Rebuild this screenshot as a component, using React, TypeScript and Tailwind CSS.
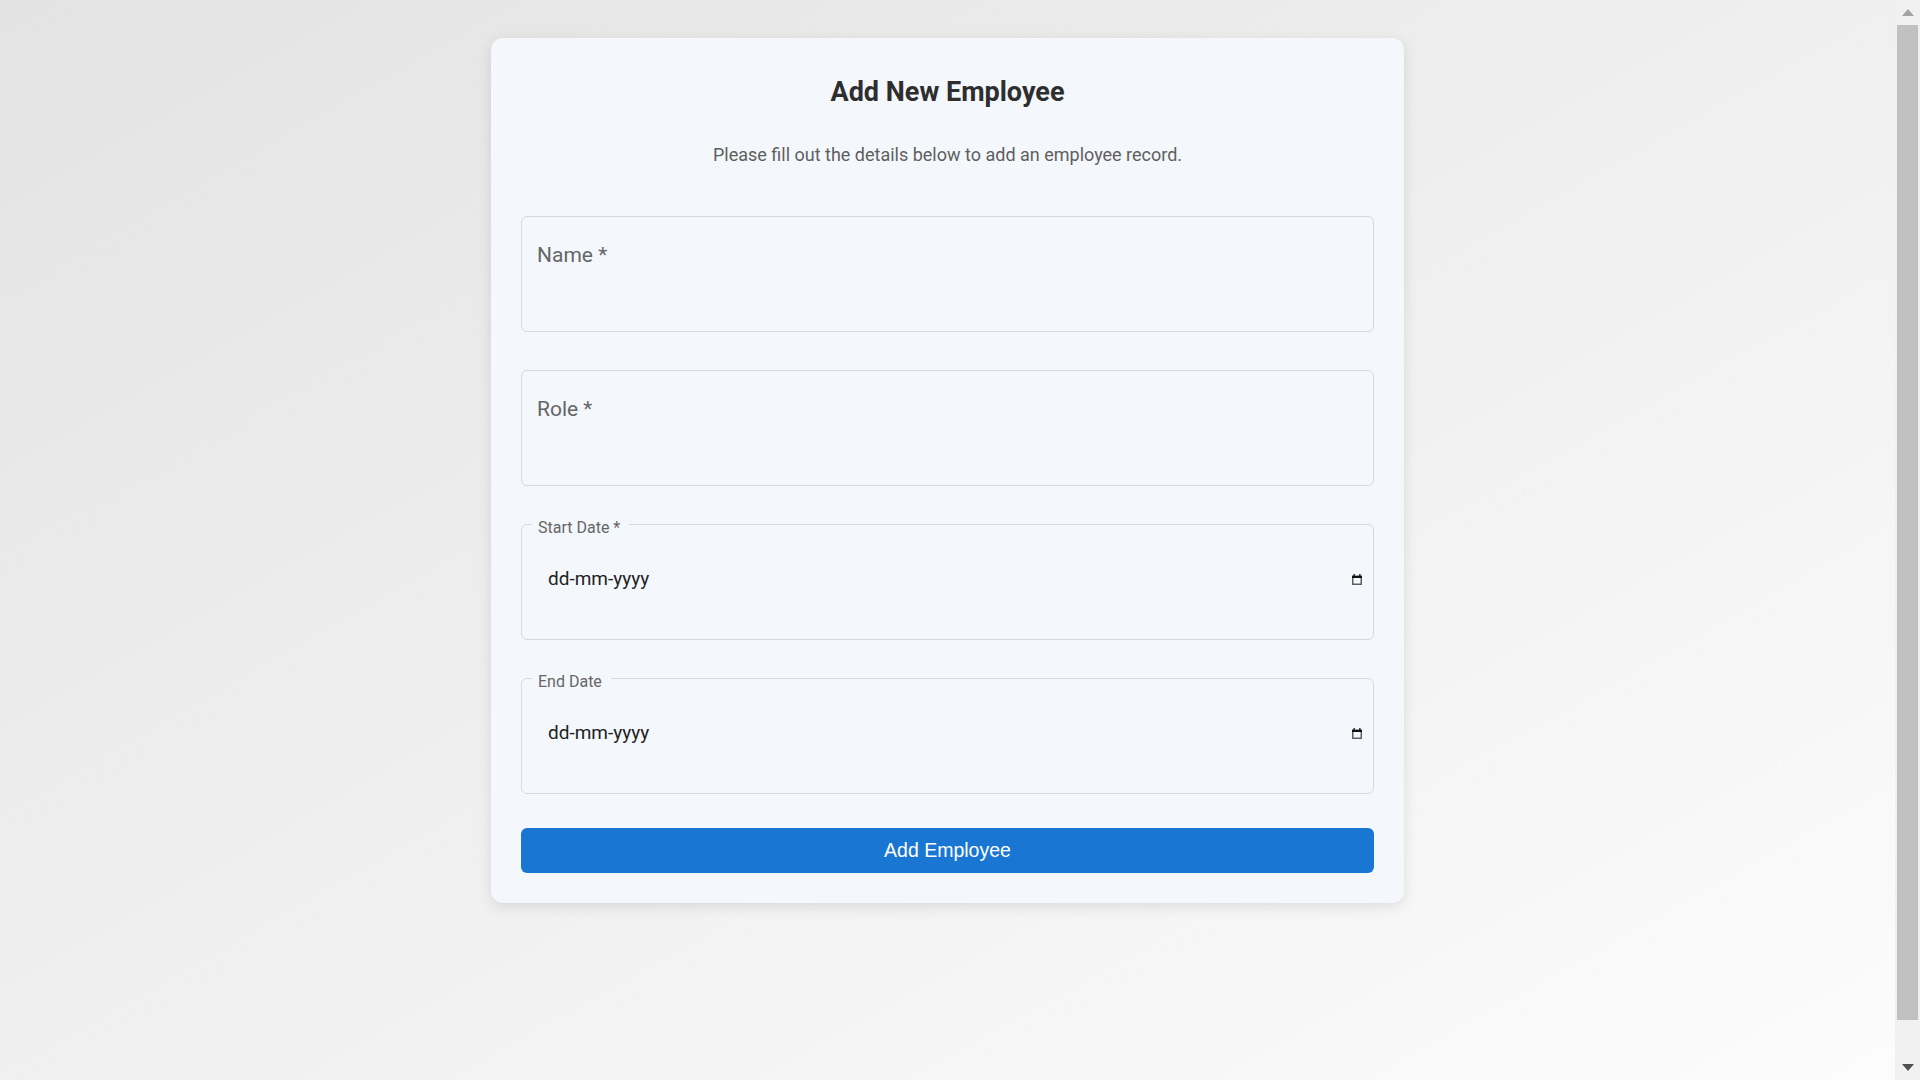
import React from 'react';

function CalendarIcon() {
  return (
    <svg width="10" height="11" viewBox="0 0 10 11" className="shrink-0">
      <rect x="0.75" y="2.5" width="8.5" height="7.75" fill="none" stroke="#5f5f5f" strokeWidth="1.5" />
      <rect x="0" y="1.75" width="10" height="2.25" fill="#111111" />
      <rect x="1.5" y="0" width="1.25" height="2" fill="#111111" />
      <rect x="7.25" y="0" width="1.25" height="2" fill="#111111" />
    </svg>
  );
}

function TextField({ label }: { label: string }) {
  return (
    <div className="h-[116px] rounded-[6px] border border-[#d6dae0] pl-[15px] pt-[26px]">
      <span className="block text-[21px] leading-[24px] text-[#666666]">{label}</span>
    </div>
  );
}

function DateField({ label }: { label: string }) {
  return (
    <div className="relative flex h-[116px] items-center justify-between rounded-[6px] border border-[#d6dae0] pl-[26px] pr-[11px]">
      <span className="absolute left-[10px] top-[-5px] bg-[#f4f7fc] pl-[6px] pr-[9px] text-[16px] leading-[16px] text-[#666666]">
        {label}
      </span>
      <span className="-mt-[7px] text-[19px] leading-[24px] text-[#222222]">dd-mm-yyyy</span>
      <div className="-mt-[6px]">
        <CalendarIcon />
      </div>
    </div>
  );
}

// page scrollbar as it shows in the screenshot
function Scrollbar() {
  return (
    <div className="fixed right-0 top-0 flex h-screen w-[25px] flex-col items-center bg-[#f1f1f1]">
      <div className="flex h-[25px] w-full items-center justify-center">
        <svg width="12" height="7" viewBox="0 0 12 7">
          <path d="M6 0 L12 7 L0 7 Z" fill="#a3a3a3" />
        </svg>
      </div>
      <div className="mx-[2px] flex-1 self-stretch bg-[#c1c1c1]" />
      <div className="h-[35px] w-full" />
      <div className="flex h-[25px] w-full items-center justify-center">
        <svg width="12" height="7" viewBox="0 0 12 7">
          <path d="M0 0 L12 0 L6 7 Z" fill="#505050" />
        </svg>
      </div>
    </div>
  );
}

export default function App() {
  return (
    <div className="min-h-screen bg-linear-to-br from-[#e3e3e3] to-[#fcfcfc] pr-[25px] pt-[38px] font-['Roboto',sans-serif]">
      <div className="mx-auto w-[913px] rounded-[12px] bg-[#f4f7fc] px-[30px] pb-[30px] pt-[38px] shadow-[0_4px_14px_rgba(0,0,0,0.1)]">
        <h1 className="text-center text-[27px] font-bold leading-[32px] text-[#2e2e2e]">Add New Employee</h1>
        <p className="mt-[35px] text-center text-[18px] leading-[24px] text-[#5f5f5f]">
          Please fill out the details below to add an employee record.
        </p>

        <form className="mt-[49px] flex flex-col gap-[38px]" onSubmit={(e) => e.preventDefault()}>
          <TextField label="Name *" />
          <TextField label="Role *" />
          <DateField label="Start Date *" />
          <DateField label="End Date" />
          <button
            type="submit"
            className="-mt-[4px] h-[45px] w-full rounded-[6px] bg-[#1976d2] font-['Liberation_Sans',Arial,sans-serif] text-[19.5px] text-white"
          >
            Add Employee
          </button>
        </form>
      </div>
      <Scrollbar />
    </div>
  );
}
